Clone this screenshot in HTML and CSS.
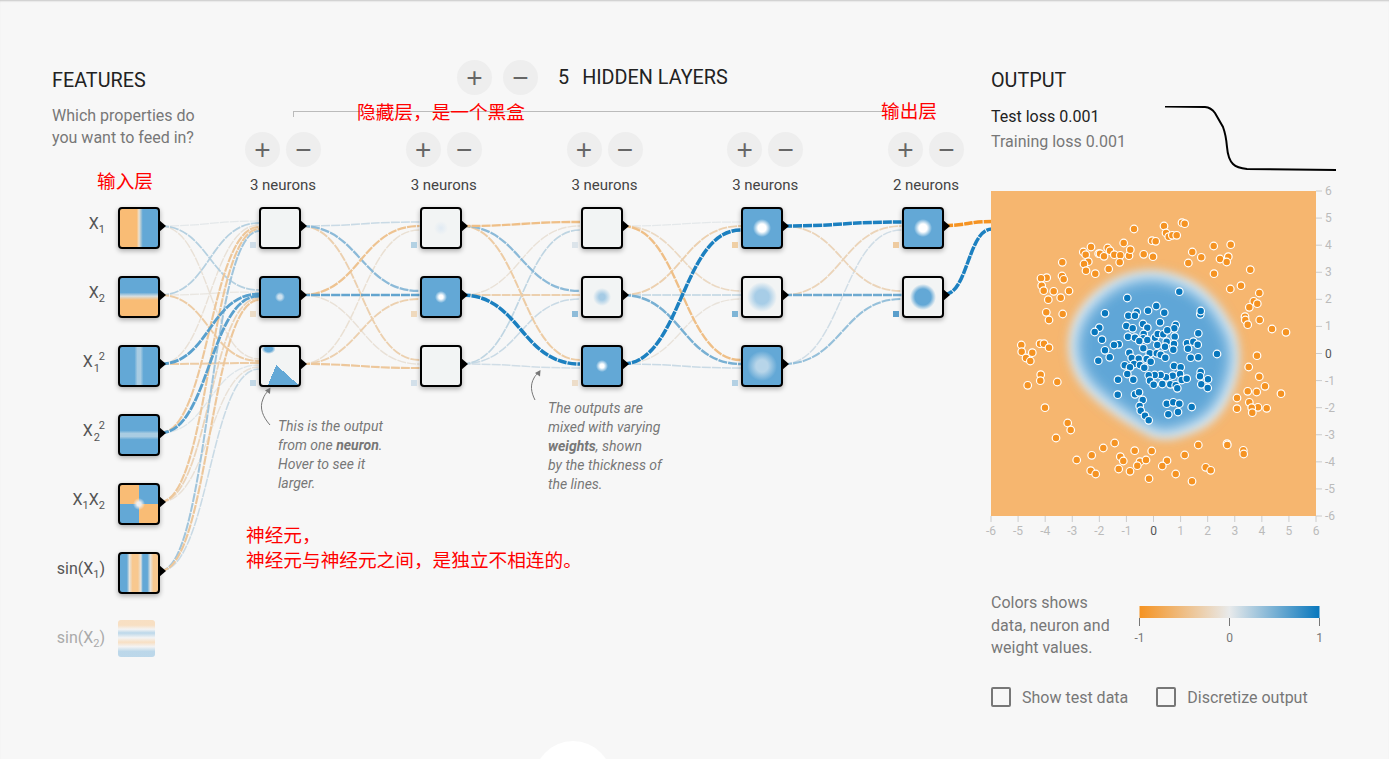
FILE: index.html
```html
<!DOCTYPE html>
<html lang="en">
<head>
<meta charset="utf-8"/>
<meta content="width=device-width, initial-scale=1.0" name="viewport"/>
<title>Neural network playground</title>
<link rel="stylesheet" href="styles.css">
</head>
<body>
<svg id="links" class="links" width="1389" height="759"></svg>

<div class="app">
  <div class="features">
    <h4>FEATURES</h4>
    <p class="hint">Which properties do<br>you want to feed in?</p>
    <div class="feature-list">
      <div class="feature"><div class="feature-label">X<sub>1</sub></div><div class="node heat-x1"></div></div>
      <div class="feature"><div class="feature-label">X<sub>2</sub></div><div class="node heat-x2"></div></div>
      <div class="feature"><div class="feature-label">X<span class="pow"><sup>2</sup><sub>1</sub></span></div><div class="node heat-x1x1"></div></div>
      <div class="feature"><div class="feature-label">X<span class="pow"><sup>2</sup><sub>2</sub></span></div><div class="node heat-x2x2"></div></div>
      <div class="feature"><div class="feature-label">X<sub>1</sub>X<sub>2</sub></div><div class="node heat-xy"></div></div>
      <div class="feature"><div class="feature-label">sin(X<sub>1</sub>)</div><div class="node heat-sinx"></div></div>
      <div class="feature off"><div class="feature-label">sin(X<sub>2</sub>)</div><div class="node-off heat-siny"></div></div>
    </div>
  </div>

  <div class="hidden-layers">
    <div class="layers-head">
      <button class="round-btn">+</button>
      <button class="round-btn">&minus;</button>
      <span class="layer-num">5</span>
      <span>HIDDEN LAYERS</span>
    </div>
    <div class="bracket"></div>
    <div class="layers">
      <div class="layer">
        <div class="layer-btns"><button class="round-btn">+</button><button class="round-btn">&minus;</button></div>
        <div class="layer-count">3 neurons</div>
        <div class="node-stack">
          <div class="node heat-plain"><i class="weight w-a1"></i></div>
          <div class="node heat-blue-dot-sm"><i class="weight w-a2"></i></div>
          <div class="node heat-corner"><i class="weight w-a3"></i></div>
        </div>
      </div>
      <div class="layer">
        <div class="layer-btns"><button class="round-btn">+</button><button class="round-btn">&minus;</button></div>
        <div class="layer-count">3 neurons</div>
        <div class="node-stack">
          <div class="node heat-faint"><i class="weight w-b1"></i></div>
          <div class="node heat-blue-dot"><i class="weight w-b2"></i></div>
          <div class="node heat-plain"><i class="weight w-b3"></i></div>
        </div>
      </div>
      <div class="layer">
        <div class="layer-btns"><button class="round-btn">+</button><button class="round-btn">&minus;</button></div>
        <div class="layer-count">3 neurons</div>
        <div class="node-stack">
          <div class="node heat-plain"><i class="weight w-c1"></i></div>
          <div class="node heat-pale-sm"><i class="weight w-c2"></i></div>
          <div class="node heat-blue-dot"><i class="weight w-c3"></i></div>
        </div>
      </div>
      <div class="layer">
        <div class="layer-btns"><button class="round-btn">+</button><button class="round-btn">&minus;</button></div>
        <div class="layer-count">3 neurons</div>
        <div class="node-stack">
          <div class="node heat-blue-blob"><i class="weight w-d1"></i></div>
          <div class="node heat-pale-lg"><i class="weight w-d2"></i></div>
          <div class="node heat-blue-pale"><i class="weight w-d3"></i></div>
        </div>
      </div>
      <div class="layer">
        <div class="layer-btns"><button class="round-btn">+</button><button class="round-btn">&minus;</button></div>
        <div class="layer-count">2 neurons</div>
        <div class="node-stack">
          <div class="node heat-blue-blob"><i class="weight w-e1"></i></div>
          <div class="node heat-solid-blob"><i class="weight w-e2"></i></div>
        </div>
      </div>
    </div>
  </div>

  <div class="output">
    <h4>OUTPUT</h4>
    <div class="loss-row">
      <div class="loss">
        <div class="loss-test">Test loss 0.001</div>
        <div class="loss-train">Training loss 0.001</div>
      </div>
      <svg class="spark" width="171" height="66">
        <path d="M0 0.5 L40 1 Q46 1.5 50 7 Q54 14 58 21 Q61 29 62 41 Q63 53 68 58 Q72 62 82 63 L171 64"/>
      </svg>
    </div>
    <svg id="plot" class="plot" width="360" height="350">
      <defs>
        <filter id="blur-edge" x="-20%" y="-20%" width="140%" height="140%"><feGaussianBlur stdDeviation="5"/></filter>
        <filter id="blur-core" x="-20%" y="-20%" width="140%" height="140%"><feGaussianBlur stdDeviation="8"/></filter>
        <clipPath id="plot-clip"><rect width="325" height="325"/></clipPath>
      </defs>
      <g clip-path="url(#plot-clip)">
        <rect width="325" height="325" fill="#f6b66f"/>
        <g transform="translate(-991 -191)">
          <path class="blob-edge" d="M1153 271 C1135 271 1117 276 1100 289 C1083 302 1072 319 1070 337 C1068 352 1071 373 1088 391 C1100 404 1121 420 1153 437 C1167 440 1177 438 1184 435 C1197 431 1207 426 1214 419 C1226 408 1234 389 1238 369 C1241 348 1235 329 1229 322 C1220 305 1209 294 1201 288 C1191 280 1172 272 1153 271 Z"/>
          <path class="blob-core" d="M1153 277 C1135 277 1119 282 1103 295 C1088 307 1078 323 1076 339 C1074 353 1078 371 1093 387 C1105 399 1125 414 1154 431 C1166 434 1175 432 1181 429 C1194 425 1203 420 1209 414 C1220 404 1228 386 1232 367 C1235 349 1229 332 1223 325 C1215 308 1205 299 1197 293 C1187 286 1171 278 1153 277 Z"/>
          <g id="dots"></g>
        </g>
      </g>
      <g id="ticks"></g>
    </svg>
    <div class="legend">
      <div class="legend-text">Colors shows<br>data, neuron and<br>weight values.</div>
      <svg class="legend-scale" width="192" height="50">
        <defs>
          <linearGradient id="scale-grad">
            <stop offset="0" stop-color="#f59322"/>
            <stop offset="0.5" stop-color="#e8eaeb"/>
            <stop offset="1" stop-color="#0877bd"/>
          </linearGradient>
        </defs>
        <rect x="6.5" width="180" height="12" fill="url(#scale-grad)"/>
        <path class="scale-tick" d="M6.5 12V20M96.5 12V20M186.5 12V20"/>
        <text x="6.5" y="36">-1</text>
        <text x="96.5" y="36">0</text>
        <text x="186.5" y="36">1</text>
      </svg>
    </div>
    <div class="checks">
      <div class="check"><span class="box"></span>Show test data</div>
      <div class="check"><span class="box"></span>Discretize output</div>
    </div>
  </div>
</div>

<!-- callouts and red notes sit on top of the diagram -->
<div class="note note-input">输入层</div>
<div class="note note-hidden">隐藏层，是一个黑盒</div>
<div class="note note-output">输出层</div>
<div class="note note-neuron">神经元，<br>神经元与神经元之间，是独立不相连的。</div>

<svg class="callout-arrows" width="1389" height="759">
  <path class="arrow-line" d="M270 425 C263 417 259 408 263 399 C264 396 266 393 268 391"/>
  <path class="arrow-head" d="M270.5 387.5 L270 394 L265 390.5 Z"/>
  <path class="arrow-line" d="M535 400 C531 392 530 385 534 378 C535 376 536 375 538 373"/>
  <path class="arrow-head" d="M540.5 370 L540 376.5 L535 373 Z"/>
</svg>
<div class="callout callout-one">This is the output<br>from one <b>neuron</b>.<br>Hover to see it<br>larger.</div>
<div class="callout callout-two">The outputs are<br>mixed with varying<br><b>weights</b>, shown<br>by the thickness of<br>the lines.</div>

<div class="fab"></div>

<script src="app.js"></script>
</body>
</html>
```

FILE: styles.css
```css
html, body {
  height: 759px;
  overflow: hidden;
}
body {
  margin: 0;
  position: relative;
  font-family: Roboto, "Noto Sans CJK SC", sans-serif;
  background-color: #f7f7f7;
  color: #777;
  box-shadow: inset 0 2px 2px -1px rgba(0, 0, 0, 0.2);
}
h4 {
  margin: 0;
  font-size: 19.8px;
  font-weight: 400;
  line-height: 21px;
  color: #222;
}
.app {
  position: relative;
  display: grid;
  grid-template-columns: 193px 746px auto;
  padding: 60px 0 0 52px;
}
.links {
  position: absolute;
  left: 0;
  top: 0;
}
.links path {
  fill: none;
  stroke-dasharray: 9 1;
}

/* features column */
.features {
  padding-top: 10px;
}
.hint {
  margin: 14px 0 0;
  font-size: 16px;
  line-height: 22px;
}
.feature-list {
  margin-top: 58px;
  display: flex;
  flex-direction: column;
  gap: 27px;
}
.feature {
  display: flex;
  align-items: center;
  gap: 13px;
  height: 42px;
}
.feature-label {
  width: 53px;
  margin-bottom: 10px;
  text-align: right;
  white-space: nowrap;
  font-size: 16px;
  color: #555;
}
.feature-label sub {
  font-size: 11px;
  line-height: 0;
}
.pow {
  display: inline-flex;
  flex-direction: column;
  vertical-align: 7px;
  margin: 4px 0 0 1px;
  text-align: left;
}
.pow sup, .pow sub {
  font-size: 11px;
  line-height: 12px;
  vertical-align: baseline;
}
.pow sup {
  margin-left: 5px;
}
.feature.off .feature-label {
  color: #aaa;
}
.node-off {
  align-self: flex-start;
  margin-top: -1px;
  width: 37px;
  height: 37px;
  border-radius: 3px;
  opacity: 0.4;
}

/* nodes */
.node {
  position: relative;
  box-sizing: border-box;
  width: 42px;
  height: 42px;
  border: 2px solid #000;
  border-radius: 4px;
  box-shadow: 0 2px 5px rgba(0, 0, 0, 0.3);
}
.node::after {
  content: "";
  position: absolute;
  left: 39px;
  top: 11px;
  border-left: 7px solid #000;
  border-top: 6px solid transparent;
  border-bottom: 6px solid transparent;
}
.weight {
  position: absolute;
  left: -11px;
  bottom: -1px;
  width: 6px;
  height: 6px;
}
.w-a1 { background-color: #cfdde8; }
.w-a2 { background-color: #ecdcc7; }
.w-a3 { background-color: #c3d8e6; }
.w-b1 { background-color: #b3d1e3; }
.w-b2 { background-color: #efd9bd; }
.w-b3 { background-color: #d3e0ea; }
.w-c1 { background-color: #dce4ea; }
.w-c2 { background-color: #8fbcd9; }
.w-c3 { background-color: #edddc9; }
.w-d1 { background-color: #efcfa5; }
.w-d2 { background-color: #7fb5d6; }
.w-d3 { background-color: #b4d1e4; }
.w-e1 { background-color: #eecba0; }
.w-e2 { background-color: #5a9ecb; }

/* heat maps */
.heat-x1 { background: linear-gradient(90deg, #f9bc75 44%, #ece2d2 50%, #63a8d6 60%); }
.heat-x2 { background: linear-gradient(180deg, #63a8d6 38%, #d6dfe2 48%, #f9bc75 58%); }
.heat-x1x1 { background: linear-gradient(90deg, #63a8d6 38%, #a9cce2 46%, #a9cce2 54%, #63a8d6 62%); }
.heat-x2x2 { background: linear-gradient(180deg, #63a8d6 38%, #a9cce2 46%, #a9cce2 54%, #63a8d6 62%); }
.heat-xy {
  background:
    radial-gradient(circle at 50% 50%, #eee 0, #eee 2px, transparent 6px),
    conic-gradient(#63a8d6 0 25%, #f9bc75 25% 50%, #63a8d6 50% 75%, #f9bc75 75%);
}
.heat-sinx { background: linear-gradient(90deg, #63a8d6 4%, #63a8d6 18%, #e6e4de 25%, #f8c88f 33%, #f8c88f 47%, #e6e4de 55%, #63a8d6 60%, #63a8d6 72%, #e6e4de 80%, #f8c88f 88%); }
.heat-siny { background: linear-gradient(180deg, #f9bc75 0, #f9bc75 14%, #eee 25%, #63a8d6 35%, #eee 48%, #f9bc75 60%, #eee 72%, #63a8d6 85%); }
.heat-plain { background: #f2f4f4; }
.heat-faint { background: radial-gradient(circle, #e0eaf3 0, #f2f4f4 7px); }
.heat-blue-dot-sm { background: radial-gradient(circle, #cfe2ef 0, #cfe2ef 2px, #63a8d6 5px); }
.heat-blue-dot { background: radial-gradient(circle, #fff 0, #fff 2px, #63a8d6 6px); }
.heat-pale-sm { background: radial-gradient(circle, #a5cbe5 0, #a5cbe5 3px, #f2f4f4 9px); }
.heat-pale-lg { background: radial-gradient(circle, #a7cde7 0, #a7cde7 7px, #f2f4f4 15px); }
.heat-blue-pale { background: radial-gradient(circle, #b7d5e9 0, #b7d5e9 6px, #63a8d6 15px); }
.heat-blue-blob { background: radial-gradient(circle, #fff 0, #fff 4px, #63a8d6 9px); }
.heat-solid-blob { background: radial-gradient(circle, #63a8d6 0, #63a8d6 8px, #f2f4f4 13px); }
.heat-corner {
  background:
    radial-gradient(ellipse 7px 5px at 20% 5%, #63a8d6 55%, transparent 100%),
    conic-gradient(from 132deg at 40% 47%, #63a8d6 0 70deg, transparent 70deg),
    #f2f4f4;
}

/* hidden layers column */
.layers-head {
  display: flex;
  align-items: center;
  gap: 11px;
  padding-left: 212px;
  font-size: 19.8px;
  color: #222;
}
.layer-num {
  margin: 0 2px 0 9px;
}
.round-btn {
  width: 35px;
  height: 35px;
  padding: 0;
  border: none;
  border-radius: 50%;
  background-color: #eee;
  color: #666;
  font-family: "Liberation Sans", sans-serif;
  font-size: 28px;
  line-height: 33px;
}
.bracket {
  margin: 16px 0 0 48px;
  width: 588px;
  height: 5px;
  border-top: 1px solid #bbb;
  border-left: 1px solid #bbb;
}
.layers {
  display: flex;
  margin-top: 15px;
}
.layer {
  flex: 0 0 160.75px;
}
.layer-btns {
  display: flex;
  gap: 6px;
}
.layer-count {
  width: 76px;
  margin-top: 9px;
  text-align: center;
  font-size: 15px;
  line-height: 18px;
  color: #444;
  white-space: nowrap;
}
.node-stack {
  margin: 13px 0 0 14px;
  display: flex;
  flex-direction: column;
  gap: 27px;
}

/* output column */
.output {
  padding-top: 10px;
}
.loss-row {
  display: flex;
  margin-top: 15px;
  height: 85px;
}
.loss {
  width: 174px;
  font-size: 16px;
}
.loss-test {
  line-height: 22px;
  color: #222;
}
.loss-train {
  margin-top: 3px;
  line-height: 22px;
}
.spark path {
  fill: none;
  stroke: #000;
  stroke-width: 2;
}
.plot {
  display: block;
  overflow: visible;
}
.blob-edge {
  fill: #fff;
  filter: url(#blur-edge);
}
.blob-core {
  fill: #5fa6d7;
  filter: url(#blur-core);
}
.dot {
  stroke: #fff;
  stroke-width: 1.2;
}
.tick-line {
  stroke: #ccc;
  stroke-width: 1;
}
.tick-text {
  font-size: 12px;
  fill: #bbb;
}
.tick-zero {
  fill: #555;
}
.legend {
  display: flex;
  margin-top: 50px;
}
.legend-text {
  width: 142px;
  padding-top: 1px;
  font-size: 16px;
  line-height: 22.5px;
}
.legend-scale {
  margin-top: 15px;
}
.legend-scale text {
  font-size: 12px;
  fill: #777;
  text-anchor: middle;
}
.scale-tick {
  stroke: #777;
  fill: none;
}
.checks {
  display: flex;
  gap: 28px;
  margin-top: 27px;
  font-size: 16px;
  line-height: 22px;
}
.check {
  display: flex;
  align-items: flex-start;
  gap: 11px;
  white-space: nowrap;
}
.box {
  box-sizing: border-box;
  width: 20px;
  height: 20px;
  border: 2px solid #777;
  border-radius: 2px;
}

/* notes over the diagram */
.note {
  position: absolute;
  font-family: "Noto Sans CJK SC", sans-serif;
  font-size: 18.67px;
  line-height: 25px;
  color: #f00;
  white-space: nowrap;
}
.note-input { left: 97px; top: 167px; }
.note-hidden { left: 357px; top: 98px; }
.note-output { left: 881px; top: 97px; }
.note-neuron { left: 246px; top: 521px; }
.callout {
  position: absolute;
  font-size: 14px;
  font-style: italic;
  line-height: 19px;
  color: #777;
  white-space: nowrap;
}
.callout-one { left: 278px; top: 417px; }
.callout-two { left: 548px; top: 399px; }
.callout-arrows {
  position: absolute;
  left: 0;
  top: 0;
  pointer-events: none;
}
.arrow-line {
  fill: none;
  stroke: #777;
}
.arrow-head {
  fill: #777;
}
.fab {
  position: absolute;
  left: 534px;
  top: 741px;
  width: 78px;
  height: 18px;
  overflow: hidden;
}
.fab::after {
  content: "";
  display: block;
  width: 78px;
  height: 78px;
  border-radius: 50%;
  background-color: #fff;
}
```

FILE: app.js
```js
const SVG_NS = "http://www.w3.org/2000/svg";

const ORANGE_DOTS = [
  [1062.3,262.3],[1083.3,252],[1091,247],[1085.7,254.7],[1088.3,261.7],[1084,264],[1086,270.7],[1095.3,273.7],
  [1098.7,253.7],[1046.7,277.7],[1041,278.3],[1062,276],[1063.7,279.3],[1041.7,285.7],[1043.7,290.7],[1053.7,291.3],
  [1069,291],[1060.7,297.7],[1048.3,299.7],[1046.3,312.3],[1049,320],[1062.7,314],[1021.3,345],[1021.7,351.7],
  [1032.3,352.7],[1026,358],[1030.3,361],[1040,343.7],[1044,343.7],[1049,347.7],[1040.7,374.7],[1040.3,380.7],
  [1027.7,385.3],[1057.3,382],[1045,407.7],[1067.7,423],[1070.7,430],[1056,438],[1076.7,460],[1091.7,455.3],
  [1134,229],[1164,226],[1182,222.7],[1184.7,223.7],[1166,233],[1168.7,236.7],[1172.3,235.3],[1176.7,235.3],
  [1152,240.7],[1155.7,241.3],[1123.7,243],[1107.7,248],[1110,250.7],[1100,253.7],[1104,256.3],[1114.3,254.7],
  [1120.3,255.3],[1129,255.7],[1130.3,249.7],[1119.7,262.3],[1143.7,254.3],[1153,256.7],[1108.7,269],
  [1192.3,252],[1201.3,257.3],[1188.3,263],[1213.7,246],[1230.7,244.7],[1220,259],[1228.3,256.7],[1226.7,262],
  [1214,273.7],[1250.3,269.7],[1241,285.7],[1230.3,289],[1259.3,293],[1253.7,301.3],[1257.3,303.7],[1249.3,307.3],
  [1245,316.7],[1245.3,320],[1247.7,324.7],[1259.7,320],[1272,329],[1286,332.3],[1257,355.7],[1248.7,367],
  [1259.3,376.7],[1265,386.3],[1281,393.7],[1247.7,391.3],[1256.7,392],[1237,398],[1249.3,402.3],[1258,407.3],
  [1266.7,408.3],[1251.7,407.7],[1252.3,412.7],[1237,408.7],[1198.3,445],[1227,443.7],[1227.3,445],[1243.3,450.3],
  [1243.7,454],[1205.7,467.3],[1210.7,470.3],[1114.7,443],[1103.3,448],[1090.7,470.7],[1095.7,474],[1120.3,456.7],
  [1123.3,461],[1118.7,469],[1134.7,450.7],[1151.7,451],[1140,461.7],[1146,460],[1137.3,465.7],[1130,471.3],
  [1167,460.7],[1162.3,466],[1149,478.7],[1175.7,474],[1192,481.3],[1184.7,455]
];

const BLUE_DOTS = [
  [1179.3,291.7],[1127.3,298],[1105,313.3],[1136.7,312],[1128.3,315.7],[1135,315.7],[1148,310.7],[1156.3,306],
  [1164.3,312.7],[1200.3,314.3],[1200.7,311],[1099.3,327.7],[1094.7,332],[1102,339.7],[1126.3,326],[1132.7,328.3],
  [1143,324],[1147.3,327.7],[1160,322.3],[1175.7,325],[1174.3,328.3],[1143.7,334],[1143.3,338.3],[1128,336.7],
  [1135,337.7],[1139.3,341],[1147.3,340],[1155,337.7],[1157.7,334],[1163.3,334.3],[1167.3,330.3],[1174.7,336.7],
  [1174,344],[1166.7,341.7],[1165,346.7],[1157.3,345],[1198.3,333.3],[1187,343.3],[1193.3,341.7],[1197.7,344.7],
  [1188,348.7],[1173.3,349.7],[1118.7,344.3],[1114,345],[1105,350.3],[1109.7,357.3],[1098.3,360.7],[1143.3,348.3],
  [1149.7,353.3],[1129.3,352.7],[1131.7,358],[1138.7,358.7],[1146.7,359],[1150.7,361.7],[1156.7,353.3],[1160.7,354.7],
  [1165.3,357.7],[1190.7,357.7],[1198.3,357.3],[1217,354],[1124.7,365.3],[1134,364],[1130,367.3],[1140,365],
  [1144.3,367.7],[1174,366],[1180.7,367.3],[1180,374],[1172.7,375.7],[1166,377.3],[1160.7,375],[1154.7,375],
  [1148.7,375.3],[1150,380.7],[1153.7,384.7],[1127.3,374],[1118,379.7],[1133.3,379.7],[1162.3,384],[1170.3,384.3],
  [1175.7,385.3],[1177.3,388.3],[1181.7,380],[1186.7,378.7],[1200.7,372],[1200,376.3],[1208,379.3],[1201.3,384.3],
  [1207.7,388],[1117.7,394.7],[1135,394.3],[1139,392.3],[1142.7,400],[1139.7,406],[1140.7,410.7],[1145,415.7],
  [1148.7,420.3],[1166.7,403.7],[1173.3,402.3],[1179.3,403.7],[1168.3,414.3],[1178,412],[1191.7,407]
];

// weights per layer: weights[layer][from][to], minus is orange
const WEIGHTS = [
  [[0.02, 0.25, -0.1], [0.25, -0.05, -0.35], [-0.1, 0.7, -0.35], [-0.4, 0.7, 0.05], [-0.4, -0.25, -0.1], [0.35, -0.4, 0.15]],
  [[0.15, 0.45, -0.3], [-0.45, 0.65, -0.1], [-0.12, -0.3, -0.4]],
  [[-0.5, 0.45, -0.35], [-0.1, -0.3, 1], [0.2, 0.15, 0.12]],
  [[0.02, -0.2, -0.5], [-0.3, 0.2, 0.55], [1, -0.08, 0.15]],
  [[1, -0.25], [-0.25, 0.6], [0.12, 0.4]]
];
const COLUMN_LEFT = [118, 259, 419.5, 580, 741, 901.5];
const NODE_SIZE = 42;
const ROW_CENTER = 226;
const ROW_STEP = 69;

function el(name, attrs, parent) {
  const node = document.createElementNS(SVG_NS, name);
  for (const key in attrs) node.setAttribute(key, attrs[key]);
  parent.appendChild(node);
  return node;
}

function mix(a, b, t) {
  return a.map(function (v, i) { return Math.round(v + (b[i] - v) * t); });
}

function weightColor(w) {
  const zero = [232, 234, 235];
  const end = w < 0 ? [245, 147, 34] : [28, 128, 192];
  return "rgb(" + mix(zero, end, Math.abs(w)).join(",") + ")";
}

function drawLink(svg, x1, y1, x2, y2, w) {
  const mid = (x1 + x2) / 2;
  el("path", {
    d: "M" + x1 + " " + y1 + " C" + mid + " " + y1 + " " + mid + " " + y2 + " " + x2 + " " + y2,
    stroke: weightColor(w),
    "stroke-width": 1.2 + 2.3 * Math.abs(w)
  }, svg);
}

function drawLinks() {
  const svg = document.getElementById("links");
  const all = [];
  WEIGHTS.forEach(function (layer, l) {
    const x1 = COLUMN_LEFT[l] + NODE_SIZE;
    const x2 = COLUMN_LEFT[l + 1];
    const spread = 12 / layer.length;
    layer.forEach(function (row, from) {
      row.forEach(function (w, to) {
        const y1 = ROW_CENTER + from * ROW_STEP;
        const y2 = ROW_CENTER + to * ROW_STEP + (from - (layer.length - 1) / 2) * spread;
        all.push([x1, y1, x2, y2, w]);
      });
    });
  });
  // heavy ones last so they stay on top
  all.sort(function (a, b) { return Math.abs(a[4]) - Math.abs(b[4]); });
  all.forEach(function (link) { drawLink(svg, link[0], link[1], link[2], link[3], link[4]); });
  drawLink(svg, 944, 225.5, 992, 221.5, -1);
  drawLink(svg, 944, 294.5, 992, 229, 1);
}

function drawDots() {
  const group = document.getElementById("dots");
  ORANGE_DOTS.forEach(function (p) {
    el("circle", { class: "dot", cx: p[0], cy: p[1], r: 3.8, fill: "#f59322" }, group);
  });
  BLUE_DOTS.forEach(function (p) {
    el("circle", { class: "dot", cx: p[0], cy: p[1], r: 3.8, fill: "#0877bd" }, group);
  });
}

function drawTicks() {
  const group = document.getElementById("ticks");
  const step = 325 / 12;
  for (let i = -6; i <= 6; i++) {
    const pos = (i + 6) * step;
    const y = 162.5 - i * step;
    const zero = i === 0 ? " tick-zero" : "";
    el("line", { class: "tick-line", x1: pos, x2: pos, y1: 325, y2: 331 }, group);
    el("line", { class: "tick-line", x1: 325, x2: 331, y1: y, y2: y }, group);
    const bottom = el("text", { class: "tick-text" + zero, x: pos, y: 344, "text-anchor": "middle" }, group);
    bottom.textContent = i;
    const right = el("text", { class: "tick-text" + zero, x: 334, y: y + 4 }, group);
    right.textContent = i;
  }
}

drawLinks();
drawDots();
drawTicks();
```
